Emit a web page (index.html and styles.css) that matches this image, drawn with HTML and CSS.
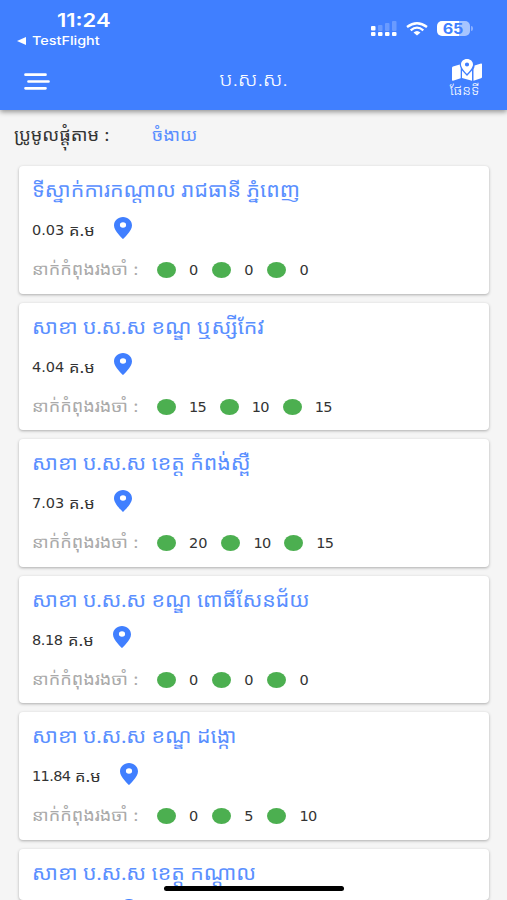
FILE: index.html
```html
<!DOCTYPE html>
<html lang="km">
<head>
<meta charset="utf-8">
<meta name="viewport" content="width=device-width, initial-scale=1">
<title>ប.ស.ស.</title>
<link rel="stylesheet" href="styles.css">
</head>
<body>
<header class="header">
  <div class="status">
    <div class="status-left">
      <div class="clock"><span>11:24</span></div>
      <div class="back"><svg width="9" height="8" viewBox="0 0 9 8"><path d="M0 4 9 0v8z" fill="#fff"/></svg><span>TestFlight</span></div>
    </div>
    <div class="status-right">
      <svg class="signal" width="26" height="16" viewBox="0 0 26 16" fill="#fff"><g opacity=".22"><rect x="7" y="4" width="4.500" height="6" rx="1"/><rect x="14" y="2" width="4.500" height="8" rx="1"/><rect x="21" y="0" width="4.500" height="10" rx="1"/></g><rect y="5" width="4.500" height="4.500" rx="1"/><rect y="11" width="4.500" height="4" rx="1"/><rect x="7" y="11" width="4.500" height="4" rx="1"/><rect x="14" y="11" width="4.500" height="4" rx="1"/><rect x="21" y="11" width="4.500" height="4" rx="1"/></svg>
      <svg class="wifi" width="22" height="14" viewBox="0 0 22 14" fill="none" stroke="#fff" stroke-width="2.300"><path d="M1 5Q11-2.600 21 5"/><path d="M4.700 8.300Q11 3 17.300 8.300"/><path d="M7.500 10.500Q11 7.500 14.500 10.500L11 13.600z" fill="#fff" stroke="none"/></svg>
      <div class="battery"><span class="level"><span>65</span></span><i class="nub"></i></div>
    </div>
  </div>
  <nav class="bar">
    <svg class="menu" width="26" height="18" viewBox="0 0 26 18" stroke="#fff" stroke-width="2.700" stroke-linecap="round"><path d="M1.500 1.700h20M4.500 8.500h20M1.500 15.300h20"/></svg>
    <h1 class="title">ប.ស.ស.</h1>
    <div class="map">
      <svg width="30" height="22" viewBox="0 0 30 22" fill="#fff"><path d="M0 9Q0 8 1 7.600L7.700 5.500C8 7.300 8.200 8 8.700 9v10.300L1 21.800Q0 22 0 21z"/><path d="M10 11.500 15 17l5-5.500v10.200L10 19z"/><path d="M21.500 10.500c.8-1.500 1-2.400 1.100-3.900L29 4.500q1-.2 1 .8v13q0 .6-1 1l-7.500 2.400z"/><path fill-rule="evenodd" d="M15 0c-3.500 0-6 2.400-6 5.600 0 2.800 3.700 7.400 6 9.400 2.300-2 6-6.600 6-9.400C21 2.400 18.500 0 15 0zm0 3.400a2.100 2.100 0 1 1 0 4.200 2.100 2.100 0 0 1 0-4.200z"/></svg>
      <span class="map-label">ផែនទី</span>
    </div>
  </nav>
</header>
<main>
  <div class="filter"><span class="filter-label"><span>ប្រូមូលផ្តុំតាម :</span></span><span class="filter-value"><span>ចំងាយ</span></span></div>
  <div class="list" id="list"></div>
</main>
<div class="home"></div>
<script src="script.js"></script>
</body>
</html>
```
FILE: styles.css
```css
* { box-sizing: border-box; }
body { margin: 0; height: 900px; overflow: hidden; background: #f5f5f5; color: #333; font-family: Inter, "Noto Sans Khmer", "Khmer OS", "Noto Sans", sans-serif; }
.header { position: relative; height: 110px; background: #407fff; color: #fff; box-shadow: 0 2px 5px rgba(0,0,0,.4); }
.status { display: flex; justify-content: space-between; height: 53px; padding: 11px 34px 0 17px; }
.clock { margin-left: 40px; font-size: 18px; line-height: 19px; font-weight: 600; }
.clock span { display: inline-block; transform: scaleX(1.220); transform-origin: left; }
.back { display: flex; align-items: center; gap: 6px; height: 21px; font-size: 12px; font-weight: 500; }
.back span { display: inline-block; transform: scaleX(1.200); transform-origin: left; }
.status-right { display: flex; align-items: flex-start; padding-top: 10px; }
.wifi { margin: 1px 0 0 9px; }
.battery { display: flex; align-items: center; margin-left: 9px; }
.level { width: 33px; height: 15px; border-radius: 5px; background: linear-gradient(90deg, #fff 66%, #a6c4ff 66%); color: #407fff; font-size: 14px; line-height: 15px; font-weight: 700; text-align: center; }
.level span { display: inline-block; transform: scaleX(1.150); }
.nub { width: 2px; height: 5px; margin-left: 1px; border-radius: 0 2px 2px 0; background: #8bb0ff; }
.bar { display: grid; grid-template-columns: 100px 1fr 100px; align-items: center; height: 57px; padding: 0 24px; }
.title { margin: -6px 0 0; font-family: Lato, "Noto Sans Khmer", sans-serif; font-size: 19px; font-weight: 300; text-align: center; transform: scaleX(1.150); }
.map { justify-self: end; display: flex; flex-direction: column; align-items: center; width: 36px; margin: -5px -2px 0 0; }
.map-label { font-size: 13px; line-height: 18px; font-weight: 300; white-space: nowrap; transform: translateX(-2px) scaleX(1.100); }
.filter { display: flex; align-items: center; height: 56px; padding: 0 14px 8px; font-size: 17px; white-space: nowrap; }
.filter-label { width: 138px; }
.filter span span { display: inline-block; transform: scaleX(1.070); transform-origin: left; }
.filter-value { color: #5a8fff; }
.list { display: grid; gap: 9px; padding: 0 18px 0 19px; }
.card { height: 127.500px; padding: 8px 13px; border-radius: 4px; background: #fff; box-shadow: 0 1px 3px rgba(0,0,0,.3); white-space: nowrap; }
.card-partial { height: 51.500px; overflow: hidden; }
.card-partial .pin { display: block; margin: 12px 0 0 88px; }
.name { height: 30px; margin: 0; color: #5a8fff; font-family: Lato, "Noto Sans Khmer", sans-serif; font-size: 20px; line-height: 30px; font-weight: 400; }
.name span { display: inline-block; transform: scaleX(1.065); transform-origin: left; }
.distance { display: flex; align-items: center; height: 52px; font-size: 14.500px; }
.km { margin-right: 5px; font-family: "DejaVu Sans", sans-serif; }
.unit { width: 45px; font-size: 15px; }
.unit span { display: inline-block; transform: scaleX(1.100); transform-origin: left; }
.pin { margin-top: -5px; }
.queue { display: flex; align-items: center; height: 28px; font-size: 14.500px; }
.queue-label { width: 125px; color: #aaa; font-size: 16px; line-height: 28px; margin-top: -2px; }
.queue-label span { display: inline-block; transform: scaleX(1.130); transform-origin: left; }
.dot { width: 19px; height: 16px; margin-right: 13px; border-radius: 50%; background: #4caf50; }
.count { margin-right: 14px; font-family: "DejaVu Sans", sans-serif; }
.home { position: absolute; left: 164px; top: 886px; width: 180px; height: 5px; border-radius: 3px; background: #000; }
```
FILE: script.js
```js
const branches = [
  ["ទីស្នាក់ការកណ្តាល រាជធានី ភ្នំពេញ", "0.03", [0, 0, 0]],
  ["សាខា ប.ស.ស ខណ្ឌ ឬស្សីកែវ", "4.04", [15, 10, 15]],
  ["សាខា ប.ស.ស ខេត្ត កំពង់ស្ពឺ", "7.03", [20, 10, 15]],
  ["សាខា ប.ស.ស ខណ្ឌ ពោធិ៍សែនជ័យ", "8.18", [0, 0, 0]],
  ["សាខា ប.ស.ស ខណ្ឌ ដង្កោ", "11.84", [0, 5, 10]]
];
const pin = '<svg class="pin" width="18" height="22" viewBox="0 0 18 22"><path fill="#407fff" fill-rule="evenodd" d="M9 0C4 0 0 3.600 0 8.500 0 14 9 22 9 22s9-8 9-13.500C18 3.600 14 0 9 0zm0 5.200a3.100 2.800 0 1 1 0 5.600 3.100 2.800 0 0 1 0-5.600z"/></svg>';
const title = name => `<h2 class="name"><span>${name}</span></h2>`;
// The digit 1 is set tighter than the others.
const number = (cls, value) => {
  const text = String(value);
  const ones = text.split("1").length - 1;
  return `<span class="${cls}" style="letter-spacing:${-1.6 * ones / text.length}px">${text}</span>`;
};
document.getElementById("list").innerHTML = branches.map(([name, km, counts]) => `
  <article class="card">
    ${title(name)}
    <div class="distance">${number("km", km)}<span class="unit"><span>គ.ម</span></span>${pin}</div>
    <div class="queue"><span class="queue-label"><span>នាក់កំពុងរងចាំ :</span></span>${counts.map(n => `<i class="dot"></i>${number("count", n)}`).join("")}</div>
  </article>`).join("") + `<article class="card card-partial">${title("សាខា ប.ស.ស ខេត្ត កណ្តាល")}${pin}</article>`;
```
